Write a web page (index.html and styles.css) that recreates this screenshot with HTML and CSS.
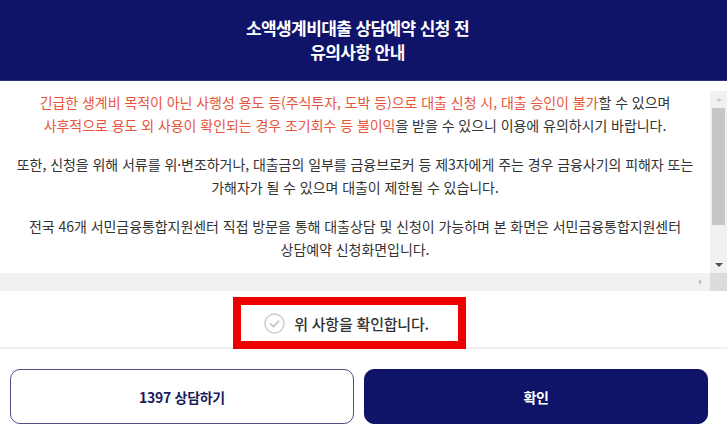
FILE: index.html
```html
<!DOCTYPE html>
<html lang="ko">
<head>
  <meta charset="UTF-8" />
  <meta name="viewport" content="width=device-width, initial-scale=1.0" />
  <title>유의사항 안내</title>
  <link rel="stylesheet" href="styles.css">
</head>
<body>
  <div class="modal">
    <header class="modal-head">
      <h1>소액생계비대출 상담예약 신청 전<br>유의사항 안내</h1>
    </header>

    <div class="modal-body">
      <div class="scroll-box">
        <div class="scroll-main">
          <div class="notice">
            <p><em>긴급한 생계비 목적이 아닌 사행성 용도 등(주식투자, 도박 등)으로 대출 신청 시, 대출 승인이 불가</em>할 수 있으며<br>
            <em>사후적으로 용도 외 사용이 확인되는 경우 조기회수 등 불이익</em>을 받을 수 있으니 이용에 유의하시기 바랍니다.</p>
            <p>또한, 신청을 위해 서류를 위·변조하거나, 대출금의 일부를 금융브로커 등 제3자에게 주는 경우 금융사기의 피해자 또는<br>
            가해자가 될 수 있으며 대출이 제한될 수 있습니다.</p>
            <p>전국 46개 서민금융통합지원센터 직접 방문을 통해 대출상담 및 신청이 가능하며 본 화면은 서민금융통합지원센터<br>
            상담예약 신청화면입니다.</p>
          </div>
          <div class="vbar">
            <span class="vbtn"><i class="tri-up"></i></span>
            <span class="thumb"></span>
            <span class="track"></span>
            <span class="vbtn"><i class="tri-down"></i></span>
          </div>
        </div>
        <div class="hbar">
          <div class="htrack"><i class="tri-right"></i></div>
          <div class="corner"></div>
        </div>
      </div>

      <div class="agree-row">
        <label class="agree">
          <svg class="check" width="21" height="21" viewBox="0 0 21 21">
            <circle cx="10.5" cy="10.5" r="9.5" fill="#fff" stroke="#cfcfcf" stroke-width="1.6"/>
            <path d="M6.5 10.8l2.8 2.8 5.3-5.5" fill="none" stroke="#c4c4c4" stroke-width="1.6" stroke-linecap="round" stroke-linejoin="round"/>
          </svg>
          <span>위 사항을 확인합니다.</span>
        </label>
      </div>
    </div>

    <footer class="modal-foot">
      <button class="btn-line">1397 상담하기</button>
      <button class="btn-fill">확인</button>
    </footer>
  </div>
</body>
</html>
```

FILE: styles.css
```css
*{box-sizing:border-box;margin:0;padding:0}
body{font-family:"Noto Sans CJK KR","Noto Sans",sans-serif;background:#fff;color:#333;width:727px;height:437px;overflow:hidden}
.modal{width:727px;height:437px;display:flex;flex-direction:column;background:#fff}

.modal-head{background:#0f1469;height:81px;display:flex;align-items:center;justify-content:center;padding-right:12px;border-bottom:1px solid #2c3185}
.modal-head h1{color:#fff;font-size:17px;font-weight:700;line-height:24px;text-align:center;letter-spacing:-.6px}

.modal-body{padding-top:10px}
.scroll-box{height:200px;display:flex;flex-direction:column}
.scroll-main{flex:1;display:flex;min-height:0}
.notice{flex:1;text-align:center;font-size:14px;line-height:23px;letter-spacing:-.05px;color:#333;overflow:hidden}
.notice p + p{margin-top:16px}
.notice em{font-style:normal;color:#e8553c}

.vbar{width:17px;display:flex;flex-direction:column;background:#f1f1f1}
.vbtn{height:17px;display:flex;align-items:center;justify-content:center}
.thumb{height:117px;background:#c6c6c6;margin:0 2px}
.track{flex:1}
.tri-up{width:0;height:0;border-left:3px solid transparent;border-right:3px solid transparent;border-bottom:3px solid #c8c8c8}
.tri-down{width:0;height:0;border-left:4px solid transparent;border-right:4px solid transparent;border-top:4px solid #505050}
.hbar{height:18px;display:flex}
.htrack{flex:1;background:#f1f1f1;display:flex;align-items:center;justify-content:flex-end;padding-right:8px}
.tri-right{width:0;height:0;border-top:3px solid transparent;border-bottom:3px solid transparent;border-left:3px solid #bdbdbd}
.corner{width:17px;background:#dcdcdc}

.agree-row{display:flex;justify-content:center;padding:6px 28px 0 0;height:58px;border-bottom:2px solid #f0f0f0}
.agree{width:233px;height:52px;border:8px solid #ee0000;display:flex;align-items:center;justify-content:center;gap:9px;padding-right:6px;font-size:15px;font-weight:500;color:#333;letter-spacing:-.2px}
.check{flex:none}

.modal-foot{display:flex;gap:10px;padding:20px 19px 11px 10px}
.modal-foot button{flex:1;height:55px;border-radius:10px;font-family:inherit;font-size:14px;font-weight:700;letter-spacing:-.3px;cursor:pointer}
.btn-line{background:#fff;border:1px solid #4e4d84;color:#1c1d5c}
.btn-fill{background:#0f1469;border:1px solid #0f1469;color:#fff}
```
